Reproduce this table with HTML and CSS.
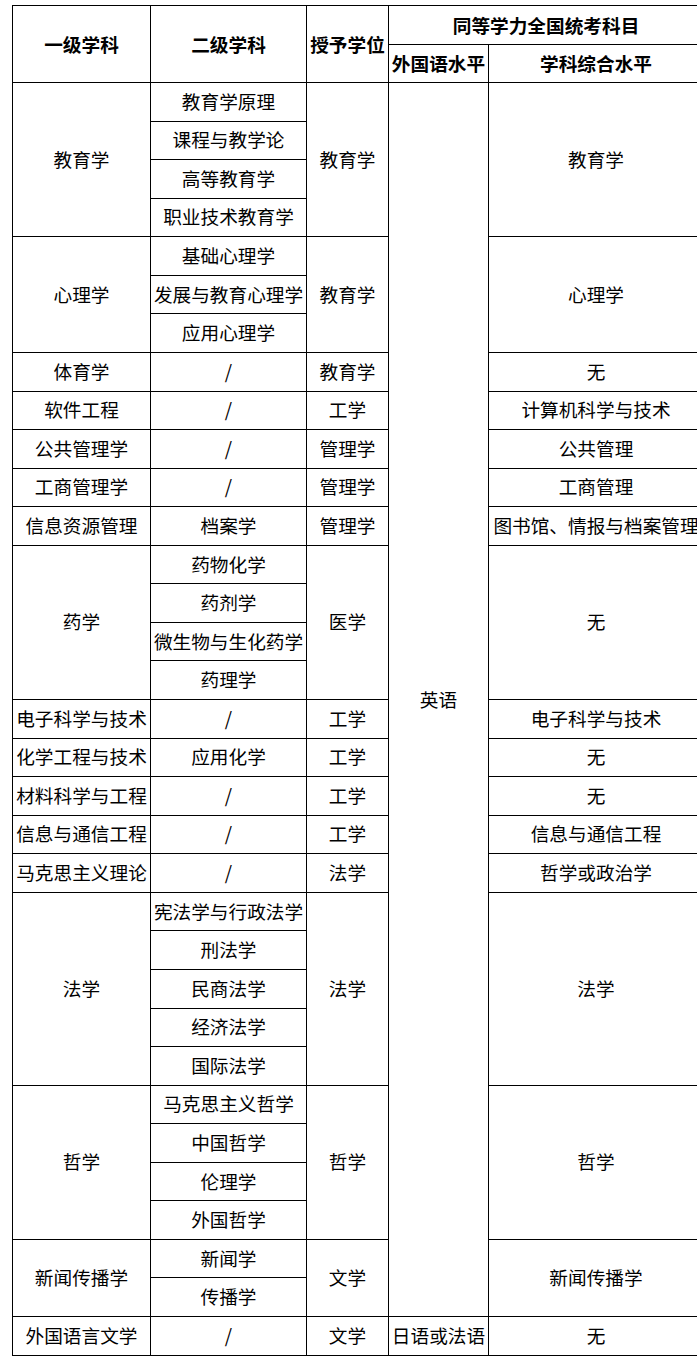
FILE: index.html
```html
<!DOCTYPE html>
<html lang="zh-CN">
<head>
<meta charset="utf-8">
<link rel="stylesheet" href="styles.css">
</head>
<body>
<table class="grid">
  <colgroup>
    <col class="c1"><col class="c2"><col class="c3"><col class="c4"><col class="c5">
  </colgroup>
  <thead>
    <tr>
      <th rowspan="2">一级学科</th>
      <th rowspan="2">二级学科</th>
      <th rowspan="2">授予学位</th>
      <th colspan="2">同等学力全国统考科目</th>
    </tr>
    <tr>
      <th>外国语水平</th>
      <th>学科综合水平</th>
    </tr>
  </thead>
  <tbody>
    <tr><td rowspan="4">教育学</td><td>教育学原理</td><td rowspan="4">教育学</td><td rowspan="32">英语</td><td rowspan="4">教育学</td></tr>
    <tr><td>课程与教学论</td></tr>
    <tr><td>高等教育学</td></tr>
    <tr><td>职业技术教育学</td></tr>
    <tr><td rowspan="3">心理学</td><td>基础心理学</td><td rowspan="3">教育学</td><td rowspan="3">心理学</td></tr>
    <tr><td>发展与教育心理学</td></tr>
    <tr><td>应用心理学</td></tr>
    <tr><td>体育学</td><td>/</td><td>教育学</td><td>无</td></tr>
    <tr><td>软件工程</td><td>/</td><td>工学</td><td>计算机科学与技术</td></tr>
    <tr><td>公共管理学</td><td>/</td><td>管理学</td><td>公共管理</td></tr>
    <tr><td>工商管理学</td><td>/</td><td>管理学</td><td>工商管理</td></tr>
    <tr><td>信息资源管理</td><td>档案学</td><td>管理学</td><td>图书馆、情报与档案管理</td></tr>
    <tr><td rowspan="4">药学</td><td>药物化学</td><td rowspan="4">医学</td><td rowspan="4">无</td></tr>
    <tr><td>药剂学</td></tr>
    <tr><td>微生物与生化药学</td></tr>
    <tr><td>药理学</td></tr>
    <tr><td>电子科学与技术</td><td>/</td><td>工学</td><td>电子科学与技术</td></tr>
    <tr><td>化学工程与技术</td><td>应用化学</td><td>工学</td><td>无</td></tr>
    <tr><td>材料科学与工程</td><td>/</td><td>工学</td><td>无</td></tr>
    <tr><td>信息与通信工程</td><td>/</td><td>工学</td><td>信息与通信工程</td></tr>
    <tr><td>马克思主义理论</td><td>/</td><td>法学</td><td>哲学或政治学</td></tr>
    <tr><td rowspan="5">法学</td><td>宪法学与行政法学</td><td rowspan="5">法学</td><td rowspan="5">法学</td></tr>
    <tr><td>刑法学</td></tr>
    <tr><td>民商法学</td></tr>
    <tr><td>经济法学</td></tr>
    <tr><td>国际法学</td></tr>
    <tr><td rowspan="4">哲学</td><td>马克思主义哲学</td><td rowspan="4">哲学</td><td rowspan="4">哲学</td></tr>
    <tr><td>中国哲学</td></tr>
    <tr><td>伦理学</td></tr>
    <tr><td>外国哲学</td></tr>
    <tr><td rowspan="2">新闻传播学</td><td>新闻学</td><td rowspan="2">文学</td><td rowspan="2">新闻传播学</td></tr>
    <tr><td>传播学</td></tr>
    <tr><td>外国语言文学</td><td>/</td><td>文学</td><td>日语或法语</td><td>无</td></tr>
  </tbody>
</table>
</body>
</html>
```
FILE: styles.css
```css
html {
  overflow: hidden;
  background: #fff;
}
body {
  margin: 0;
  padding: 5px 0 0 12px;
  font-family: "Noto Sans CJK SC", "Noto Sans", sans-serif;
  color: #000;
}
.grid {
  border-collapse: collapse;
  table-layout: fixed;
  width: 691px;
}
.c1 { width: 138px; }
.c2 { width: 156px; }
.c3 { width: 82px; }
.c4 { width: 100px; }
.c5 { width: 215px; }
.grid th,
.grid td {
  border: 1px solid #000;
  padding: 0 0 2px 0;
  height: 35.57px;
  text-align: center;
  vertical-align: middle;
  font-size: 18.67px;
  line-height: 24px;
  white-space: nowrap;
  overflow: hidden;
}
.grid th {
  font-weight: 700;
  padding: 0;
  height: 37.5px;
}
```
